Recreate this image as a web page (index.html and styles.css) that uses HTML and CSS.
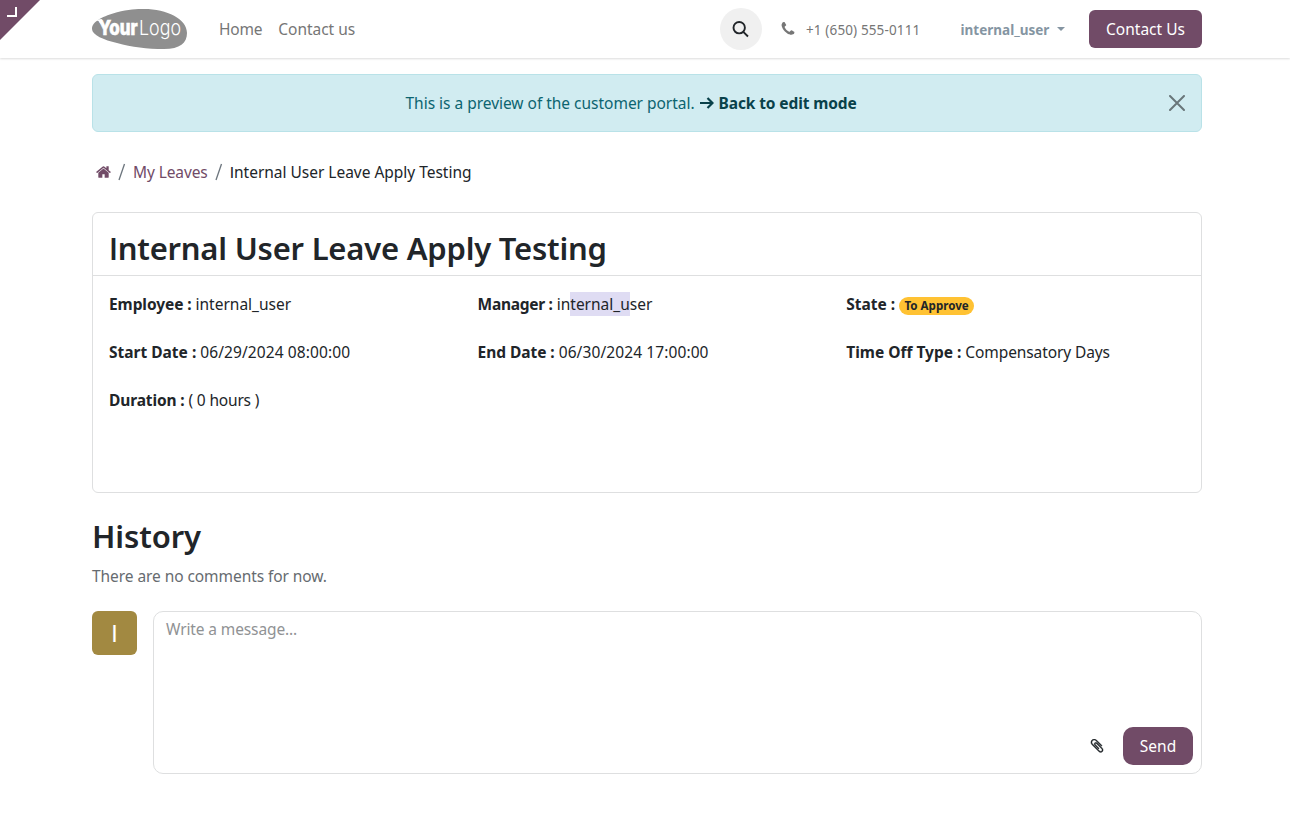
FILE: index.html
```html
<!DOCTYPE html>
<html lang="en">
<head>
<meta charset="utf-8">
<title>Internal User Leave Apply Testing</title>
<link rel="stylesheet" href="styles.css">
</head>
<body>
<header class="navbar">
  <div class="corner"><svg width="40" height="40" viewBox="0 0 40 40"><path d="M0 0H40L0 40Z" fill="#714b67"/><path d="M7 16H16V7" fill="none" stroke="#fff" stroke-width="2"/></svg></div>
  <div class="container nav-row">
    <svg class="logo" width="95" height="40" viewBox="0 0 95 40"><path d="M0 20C0 12 12 7 25 3.300C36 .5 45 0 52 0C75 0 95 10 95 24C95 34 88 40 72 40C55 40 40 38 25 34C12 31 0 26 0 20Z" fill="#8f8f8f"/><path d="M3 11L10 10L8.500 15L6.500 12Z" fill="#fff"/><text class="logo-bold" x="6.500" y="25.500" textLength="39" lengthAdjust="spacingAndGlyphs">Your</text><text class="logo-thin" x="47" y="25.500" textLength="42" lengthAdjust="spacingAndGlyphs">Logo</text></svg>
    <nav class="links"><a><span class="t nav-home">Home</span></a><a><span class="t nav-contact">Contact us</span></a></nav>
    <div class="actions">
      <button class="search" aria-label="Search"><svg width="18" height="18" viewBox="0 0 18 18" fill="none" stroke="#212529" stroke-width="1.900"><circle cx="7.200" cy="7.700" r="5.700"/><path d="M11.300 11.800L16 16.500"/></svg></button>
      <div class="phone"><svg width="14" height="14" viewBox="128 128 1536 1536" fill="#767676"><path d="M1600 1240q0 27-10 70.500t-21 68.500q-21 50-122 106-94 51-186 51-27 0-52.500-3.500t-57.500-12.500-47.500-14.500-55.500-20.500-49-18q-98-35-175-83-128-79-264.500-215.500t-215.500-264.500q-48-77-83-175-3-9-18-49t-20.500-55.500-14.500-47.500-12.500-57.500-3.500-52.500q0-92 51-186 56-101 106-122 25-11 68.500-21t70.500-10q14 0 21 3 18 6 53 76 11 19 30 54t35 63.500 31 53.500q3 4 17.500 25t21.500 35.500 7 28.500q0 20-28.500 50t-62 55-62 53-28.500 46q0 9 5 22.500t8.500 20.500 14 24 11.500 19q76 137 174 235t235 174q2 1 19 11.500t24 14 20.500 8.500 22.500 5q18 0 46-28.500t53-62 55-62 50-28.500q14 0 28.500 7t35.500 21.500 25 17.500q25 15 53.500 31t63.500 35 54 30q70 35 76 53 3 7 3 21z"/></svg><span class="t phone-no">+1 (650) 555-0111</span></div>
      <div class="user"><span class="t user-name">internal_user</span><i class="caret"></i></div>
      <button class="btn btn-contact"><span class="t">Contact Us</span></button>
    </div>
  </div>
</header>
<main class="container">
  <div class="alert">
    <div class="alert-text"><span class="t alert-msg">This is a preview of the customer portal.</span><svg width="14" height="14" viewBox="0 0 14 14" fill="none" stroke="#09414a" stroke-width="2.200"><path d="M0 7H12M7.500 2L12.500 7L7.500 12"/></svg><b class="t alert-link">Back to edit mode</b></div>
    <svg class="close" width="16" height="16" viewBox="0 0 16 16" fill="none" stroke="#69767a" stroke-width="2" stroke-linecap="round"><path d="M1 1L15 15M15 1L1 15"/></svg>
  </div>
  <div class="crumbs"><svg width="15" height="14" viewBox="64 160 1664 1472" fill="#714b67"><path d="M1472 992v480q0 26-19 45t-45 19h-384v-384h-256v384h-384q-26 0-45-19t-19-45v-480q0-1 .5-3t.5-3l575-474 575 474q1 2 1 6zm223-69l-62 74q-8 9-21 11h-3q-13 0-21-7l-692-577-692 577q-12 8-24 7-13-2-21-11l-62-74q-8-10-7-23.500t11-21.500l719-599q32-26 76-26t76 26l244 204v-195q0-14 9-23t23-9h192q14 0 23 9t9 23v408l219 182q10 8 11 21.500t-7 23.500z"/></svg><span class="sep"><svg width="8" height="18" viewBox="0 0 8 18"><path d="M1 17L6.500 1" stroke="#6c757d" stroke-width="1.300"/></svg></span><a class="t crumb-link">My Leaves</a><span class="sep"><svg width="8" height="18" viewBox="0 0 8 18"><path d="M1 17L6.500 1" stroke="#6c757d" stroke-width="1.300"/></svg></span><span class="t crumb-now"><span class="cap-i">I</span>nternal User Leave Apply Testing</span></div>
  <section class="card">
    <h1><span class="t title"><span class="cap-i">I</span>nternal User Leave Apply Testing</span></h1>
    <div class="grid">
      <div class="f"><b class="t l-employee">Employee :</b><span class="t v-user">internal_user</span></div>
      <div class="f"><b class="t l-manager">Manager :</b><span class="t v-user">in<mark>ternal_u</mark>ser</span></div>
      <div class="f"><b class="t l-state">State :</b><span class="badge"><span class="t">To Approve</span></span></div>
      <div class="f"><b class="t">Start Date :</b><span class="t v-date">06/29/2024 08:00:00</span></div>
      <div class="f"><b class="t l-end">End Date :</b><span class="t v-date">06/30/2024 17:00:00</span></div>
      <div class="f"><b class="t">Time Off Type :</b><span class="t v-type">Compensatory Days</span></div>
      <div class="f"><b class="t l-duration">Duration :</b><span class="t v-duration">( 0 hours )</span></div>
    </div>
  </section>
  <h2><span class="t history">History</span></h2>
  <p class="empty"><span class="t empty-text">There are no comments for now.</span></p>
  <div class="composer">
    <div class="avatar">I</div>
    <div class="box"><span class="t placeholder">Write a message...</span>
      <div class="tools"><svg width="14" height="14" viewBox="128 128 1536 1600" fill="#212529" stroke="#212529" stroke-width="40"><path d="M1596 1385q0 117-79 196t-196 79q-135 0-235-100l-777-776q-113-115-113-271 0-159 110-270t269-111q158 0 273 113l605 606q10 10 10 22 0 16-30.500 46.500t-46.500 30.500q-13 0-23-10l-606-607q-79-77-181-77-106 0-179 75t-73 181q0 105 76 181l776 777q63 63 145 63 64 0 106-42t42-106q0-82-63-145l-581-581q-26-24-60-24-29 0-48 19t-19 48q0 32 25 59l410 410q10 10 10 22 0 16-31 47t-47 31q-12 0-22-10l-410-410q-63-61-63-149 0-82 57-139t139-57q88 0 149 63l581 581q100 98 100 235z"/></svg><button class="btn btn-send"><span class="t">Send</span></button></div>
    </div>
  </div>
</main>
</body>
</html>
```
FILE: styles.css
```css
* { box-sizing: border-box; }
body { margin: 0; background: #fff; color: #212529; font: 15.5px/24px "Noto Sans", "Open Sans", sans-serif; overflow: hidden; }
svg { display: block; flex: none; }
.t { white-space: nowrap; display: inline-block; }
.cap-i { font-family: "Lato", sans-serif; }
.container { width: 1110px; margin-left: 92px; }
.navbar { position: relative; height: 58px; box-shadow: 0 1px 2px rgba(0,0,0,.14); }
.corner { position: absolute; left: 0; top: 0; }
.nav-row { display: flex; align-items: center; height: 58px; }
.logo-bold { font: 800 20.5px "Inter", sans-serif; fill: #fff; stroke: #fff; stroke-width: .6px; }
.logo-thin { font: 300 20.5px "Inter", sans-serif; fill: #fff; }
.links { display: flex; gap: 16px; margin-left: 32px; color: #767676; }
.nav-home { letter-spacing: -.2px; }
.nav-contact { letter-spacing: -.03px; }
.actions { display: flex; align-items: center; margin-left: auto; }
.search { display: grid; place-items: center; width: 42px; height: 42px; border: 0; border-radius: 50%; background: #f0f0f0; padding: 0; }
.phone { display: flex; align-items: center; gap: 11px; margin-left: 19px; width: 179.500px; color: #767676; font-size: 13.5px; }
.phone-no { letter-spacing: .13px; padding-top: 1px; }
.user { display: flex; align-items: center; color: #8595a2; font-weight: 700; font-size: 13.5px; width: 128.500px; gap: 8px; }
.user-name { padding-top: 1px; }
.caret { border: 4px solid transparent; border-top-color: currentColor; border-bottom: 0; }
.btn { border: 0; border-radius: 6px; background: #714b67; color: #fff; font: inherit; height: 38px; padding: 0; }
.btn-contact { width: 113px; }
.alert { display: flex; align-items: center; margin-top: 16px; height: 58px; border: 1px solid #b9e2e8; border-radius: 6px; background: #d1ecf1; color: #0c6470; padding-right: 16px; }
.alert-text { flex: 1; display: flex; align-items: center; padding-left: 312.500px; gap: 5px; }
.alert-msg { letter-spacing: -.02px; }
.alert-link { color: #09414a; letter-spacing: -.12px; }
.crumbs { display: flex; align-items: center; margin-top: 28px; height: 24px; padding-left: 4px; }
.sep { display: grid; place-items: center; width: 22px; }
.crumb-link { color: #714b67; letter-spacing: -.1px; }
.crumb-now { letter-spacing: -.02px; }
.card { margin-top: 28px; height: 281px; border: 1px solid #dedfe0; border-radius: 6px; }
h1, h2 { margin: 0; font-weight: 600; font-size: 31px; }
h1 { height: 63px; padding: 16px 16px 0; line-height: 38px; border-bottom: 1px solid #dedfe0; }
.title { letter-spacing: -.22px; }
.grid { display: grid; grid-template-columns: 368.6px 368.6px 1fr; grid-auto-rows: 24px; row-gap: 24px; padding: 16px; }
.f { display: flex; align-items: center; gap: 4px; }
.l-employee { letter-spacing: -.08px; }
.l-manager { letter-spacing: -.28px; }
.l-end { letter-spacing: -.05px; }
.l-duration { letter-spacing: -.13px; }
.v-date { letter-spacing: .1px; }
.v-type { letter-spacing: -.1px; }
.v-duration { letter-spacing: -.18px; }
mark { background: #dfdcf3; color: inherit; display: inline-block; }
.badge { display: grid; place-items: center; width: 75px; height: 18px; border-radius: 9px; background: #ffc233; font-size: 11.600px; font-weight: 700; line-height: 18px; margin-top: 4px; }
h2 { margin-top: 24px; line-height: 38px; }
.history { letter-spacing: -.1px; }
.empty { margin: 9px 0 0; color: #666b70; }
.empty-text { letter-spacing: -.07px; }
.composer { display: flex; gap: 16px; margin-top: 23px; }
.avatar { width: 45px; height: 44px; border-radius: 6px; background: #a28941; color: #fff; display: grid; place-items: center; font-family: "Lato", sans-serif; font-size: 23px; }
.box { flex: 1; display: flex; flex-direction: column; justify-content: space-between; height: 163px; border: 1px solid #dedfe0; border-radius: 10px; padding: 5px 8px 8px 12px; color: #909294; }
.placeholder { letter-spacing: -.12px; }
.tools { display: flex; align-items: center; justify-content: flex-end; gap: 19.5px; }
.btn-send { width: 70px; border-radius: 10px; }
```
